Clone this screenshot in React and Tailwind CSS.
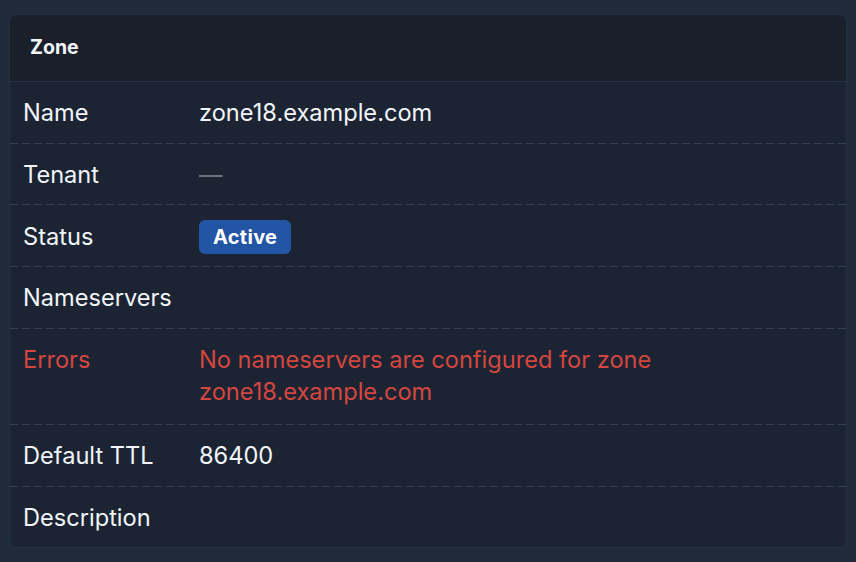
import React from 'react';

const rows = [
    { label: 'Name', value: 'zone18.example.com' },
    { label: 'Tenant', value: 'dash' },
    { label: 'Status', value: 'badge' },
    { label: 'Nameservers', value: '' },
    { label: 'Errors', value: 'No nameservers are configured for zone zone18.example.com', error: true },
    { label: 'Default TTL', value: '86400' },
    { label: 'Description', value: '' },
];

const Divider = () => (
    <div className="h-px w-full bg-[repeating-linear-gradient(to_right,#2e4057_0px,#2e4057_8px,transparent_8px,transparent_12px)]" />
);

const Value = ({ row }) => {
    if (row.value === 'dash') {
        return <span className="text-[#6b7280]">—</span>;
    }
    if (row.value === 'badge') {
        return (
            <div className="flex h-[32px] items-center">
                <span className="flex h-[34px] shrink-0 items-center rounded-md bg-[#2255a4] px-[14px] text-[20px] font-bold leading-none tracking-[0.3px] text-white">
                    Active
                </span>
            </div>
        );
    }
    return <span className={row.error ? 'text-[#d4463f]' : 'text-[#f1f5f9]'}>{row.value}</span>;
};

export default function App() {
    return (
        <div className="min-h-screen bg-[#1f2a3b] px-[9px] pt-[14px] pb-[14px] font-['Inter',sans-serif]">
            <div className="overflow-hidden rounded-lg border border-[#263246] bg-[#1c2433]">
                {/* Header */}
                <div className="flex h-[67px] items-center border-b border-[#263246] bg-[#1a1f2a] px-[20px]">
                    <h2 className="text-[19.5px] font-bold text-[#f1f5f9]">Zone</h2>
                </div>

                {rows.map((row, i) => (
                    <div key={row.label}>
                        <div className={`flex pt-[15.2px] text-[23.6px] leading-[32px] ${row.error ? 'pb-[16px]' : 'pb-[13.5px]'}`}>
                            <div className={`w-[189px] shrink-0 pl-[13px] ${row.error ? 'text-[#d4463f]' : 'text-[#f1f5f9]'}`}>
                                {row.label}
                            </div>
                            <div className="min-h-[32px] flex-1 pr-[24px]">
                                <Value row={row} />
                            </div>
                        </div>
                        {i < rows.length - 1 && <Divider />}
                    </div>
                ))}
            </div>
        </div>
    );
}
